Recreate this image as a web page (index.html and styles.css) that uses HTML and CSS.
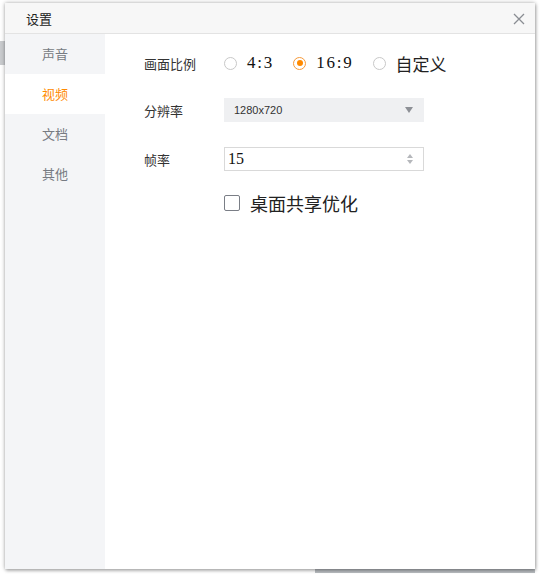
FILE: index.html
```html
<!DOCTYPE html>
<html lang="zh-CN">
<head>
    <meta charset="UTF-8">
    <title>设置</title>
    <link rel="stylesheet" href="styles.css">
</head>
<body>
    <div class="behind-left"></div>
    <div class="behind-bottom"></div>
    <div class="dialog">
        <div class="titlebar">
            <span class="title">设置</span>
            <span class="close">
                <svg width="12" height="12" viewBox="0 0 12 12"><path d="M1 1L11 11M11 1L1 11" stroke="#8a8d93" stroke-width="1.3" fill="none"/></svg>
            </span>
        </div>
        <div class="body">
            <div class="sidebar">
                <div class="side-item">声音</div>
                <div class="side-item active">视频</div>
                <div class="side-item">文档</div>
                <div class="side-item">其他</div>
            </div>
            <div class="content">
                <div class="row row-ratio">
                    <div class="label">画面比例</div>
                    <div class="radios">
                        <label class="radio"><span class="dot"></span><span class="radio-text">4:3</span></label>
                        <label class="radio checked"><span class="dot"></span><span class="radio-text">16:9</span></label>
                        <label class="radio"><span class="dot"></span><span class="radio-text cjk">自定义</span></label>
                    </div>
                </div>
                <div class="row">
                    <div class="label">分辨率</div>
                    <div class="select">
                        <span>1280x720</span>
                        <span class="caret"></span>
                    </div>
                </div>
                <div class="row">
                    <div class="label">帧率</div>
                    <div class="spin">
                        <span class="spin-value">15</span>
                        <span class="spin-arrows">
                            <span class="up"></span>
                            <span class="down"></span>
                        </span>
                    </div>
                </div>
                <div class="row row-check">
                    <div class="label"></div>
                    <label class="check"><span class="box"></span><span class="check-text">桌面共享优化</span></label>
                </div>
            </div>
        </div>
    </div>
</body>
</html>
```

FILE: styles.css
```css
body {
    margin: 0;
    padding: 3px 5px 0 5px;
    background-color: #ffffff;
    font-family: "Noto Sans CJK SC", "Noto Sans", sans-serif;
    color: #333;
    position: relative;
    height: 574px;
    box-sizing: border-box;
    overflow: hidden;
}
/* bits of the main window peeking out behind the dialog */
.behind-left {
    position: absolute;
    left: 0;
    top: 41px;
    width: 5px;
    height: 24px;
    background-color: #c9cbce;
}
.behind-bottom {
    position: absolute;
    left: 315px;
    top: 569px;
    width: 220px;
    height: 4px;
    background-color: #b9bdc1;
}
.dialog {
    position: relative;
    width: 530px;
    height: 566px;
    display: flex;
    flex-direction: column;
    background-color: #fff;
    box-shadow: 0 0 4px rgba(0,0,0,0.35), 1px 2px 3px rgba(0,0,0,0.2);
}
.titlebar {
    height: 30px;
    flex: none;
    display: flex;
    align-items: center;
    justify-content: space-between;
    padding: 0 10px 0 21px;
    background-color: #f7f7f7;
    border-bottom: 1px solid #e3e3e3;
}
.title {
    font-size: 13px;
    color: #222;
}
.close {
    display: flex;
    padding-top: 1px;
}
.body {
    flex: 1;
    display: flex;
}
.sidebar {
    width: 100px;
    background-color: #f4f5f7;
}
.side-item {
    height: 40px;
    line-height: 40px;
    text-align: center;
    font-size: 13px;
    color: #777b82;
}
.side-item.active {
    background-color: #fff;
    color: #ff8a00;
}
.content {
    flex: 1;
    padding: 17px 0 0 39px;
}
.row {
    display: flex;
    align-items: center;
    height: 24px;
    margin-bottom: 25px;
}
.row-ratio {
    margin-bottom: 23px;
}
.row-check {
    margin-top: -5px;
}
.label {
    width: 80px;
    font-size: 13px;
    color: #333;
}
.radios {
    display: flex;
    align-items: center;
}
.radio {
    display: flex;
    align-items: center;
    margin-right: 19px;
}
.dot {
    width: 11px;
    height: 11px;
    border: 1px solid #c8c8c8;
    border-radius: 50%;
    box-sizing: content-box;
    margin-right: 10px;
    position: relative;
}
.radio.checked .dot {
    border-color: #f79a3a;
}
.radio.checked .dot::after {
    content: "";
    position: absolute;
    left: 2.5px;
    top: 2.5px;
    width: 6px;
    height: 6px;
    border-radius: 50%;
    background-color: #ff8a00;
}
.radio-text {
    font-family: "Liberation Serif", "Noto Sans CJK SC", serif;
    font-size: 17px;
    letter-spacing: 1.8px;
    color: #111;
}
.radio-text.cjk {
    font-family: "Noto Sans CJK SC", sans-serif;
    font-size: 17px;
    letter-spacing: 0;
    color: #222;
}
.select {
    width: 200px;
    height: 24px;
    box-sizing: border-box;
    padding: 0 10px;
    background-color: #eff0f2;
    display: flex;
    align-items: center;
    justify-content: space-between;
    font-family: "Liberation Sans", sans-serif;
    font-size: 11px;
    color: #333;
}
.caret {
    width: 0;
    height: 0;
    border-left: 4px solid transparent;
    border-right: 4px solid transparent;
    border-top: 6px solid #8d9096;
    margin-right: 1px;
}
.spin {
    width: 200px;
    height: 24px;
    box-sizing: border-box;
    border: 1px solid #d9d9d9;
    padding: 0 10px 0 3px;
    display: flex;
    align-items: center;
    justify-content: space-between;
}
.spin-value {
    font-family: "Liberation Serif", serif;
    font-size: 16px;
    color: #111;
}
.spin-arrows {
    display: flex;
    flex-direction: column;
    gap: 2px;
}
.spin-arrows .up {
    width: 0;
    height: 0;
    border-left: 3px solid transparent;
    border-right: 3px solid transparent;
    border-bottom: 4px solid #b5b7bb;
}
.spin-arrows .down {
    width: 0;
    height: 0;
    border-left: 3px solid transparent;
    border-right: 3px solid transparent;
    border-top: 4px solid #b5b7bb;
}
.check {
    display: flex;
    align-items: center;
}
.box {
    width: 14px;
    height: 14px;
    border: 1px solid #7a7e86;
    border-radius: 2px;
    margin-right: 10px;
}
.check-text {
    font-size: 18px;
    color: #222;
}
```
